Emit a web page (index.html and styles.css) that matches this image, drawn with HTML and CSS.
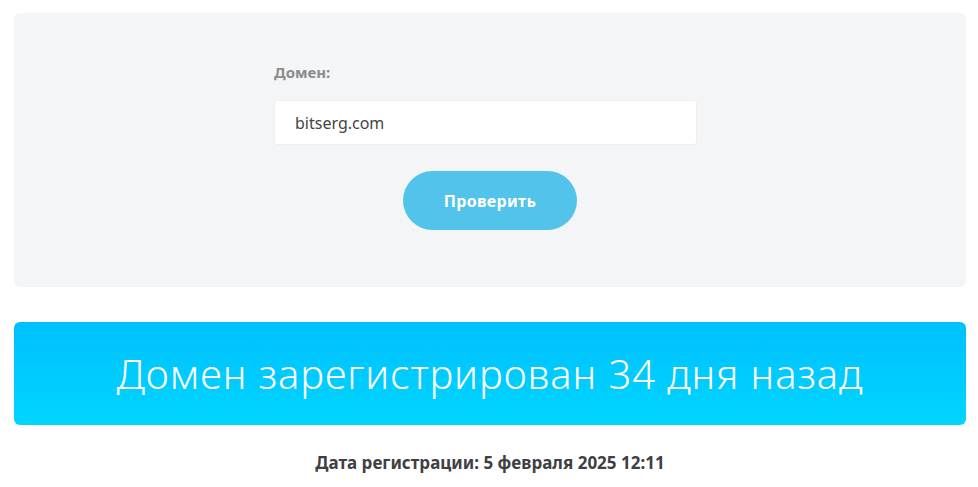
FILE: index.html
```html
<!DOCTYPE html>
<html lang="ru">
<head>
    <meta charset="UTF-8">
    <meta name="viewport" content="width=device-width, initial-scale=1.0">
    <title>Проверка возраста домена</title>
    <link rel="stylesheet" href="styles.css">
</head>
<body>
    <main class="page">
        <section class="check-panel">
            <form class="check-form">
                <label class="field-label" for="domain">Домен:</label>
                <input class="field-input" type="text" id="domain" value="bitserg.com">
                <button class="check-button" type="submit">Проверить</button>
            </form>
        </section>
        <div class="result-banner">Домен зарегистрирован 34 дня назад</div>
        <p class="result-date">Дата регистрации: 5 февраля 2025 12:11</p>
    </main>
</body>
</html>
```

FILE: styles.css
```css
body {
    margin: 0;
    font-family: "Noto Sans", "Open Sans", Arial, sans-serif;
    background-color: #fff;
    color: #3f4045;
}
.page {
    width: 952px;
    padding: 13px 0 0 14px;
}
.check-panel {
    height: 274px;
    box-sizing: border-box;
    padding-top: 49px;
    background-color: #f3f5f6;
    border-radius: 6px;
}
.check-form {
    display: flex;
    flex-direction: column;
    width: 432px;
    margin: 0 auto;
}
.field-label {
    font-size: 15px;
    font-weight: 700;
    color: #8c8c8c;
    line-height: 20px;
}
.field-input {
    width: 423px;
    height: 45px;
    box-sizing: border-box;
    margin-top: 18px;
    padding: 0 20px;
    border: 1px solid #eceeef;
    border-radius: 3px;
    background-color: #fff;
    font-family: inherit;
    font-size: 16px;
    color: #444;
    outline: none;
}
.check-button {
    align-self: center;
    width: 174px;
    height: 59px;
    margin-top: 26px;
    border: none;
    border-radius: 30px;
    background-color: #52c3ea;
    color: #fff;
    font-family: inherit;
    font-size: 16px;
    font-weight: 700;
    letter-spacing: 0.3px;
    cursor: pointer;
}
.result-banner {
    margin-top: 35px;
    height: 103px;
    display: flex;
    align-items: center;
    justify-content: center;
    border-radius: 6px;
    background: linear-gradient(to bottom, #00c0fd, #00d5ff);
    color: #fff;
    font-size: 40px;
    font-weight: 300;
    letter-spacing: 0.9px;
}
.result-date {
    margin: 26px 0 0;
    text-align: center;
    font-size: 17px;
    font-weight: 700;
    color: #3f4045;
}
```
